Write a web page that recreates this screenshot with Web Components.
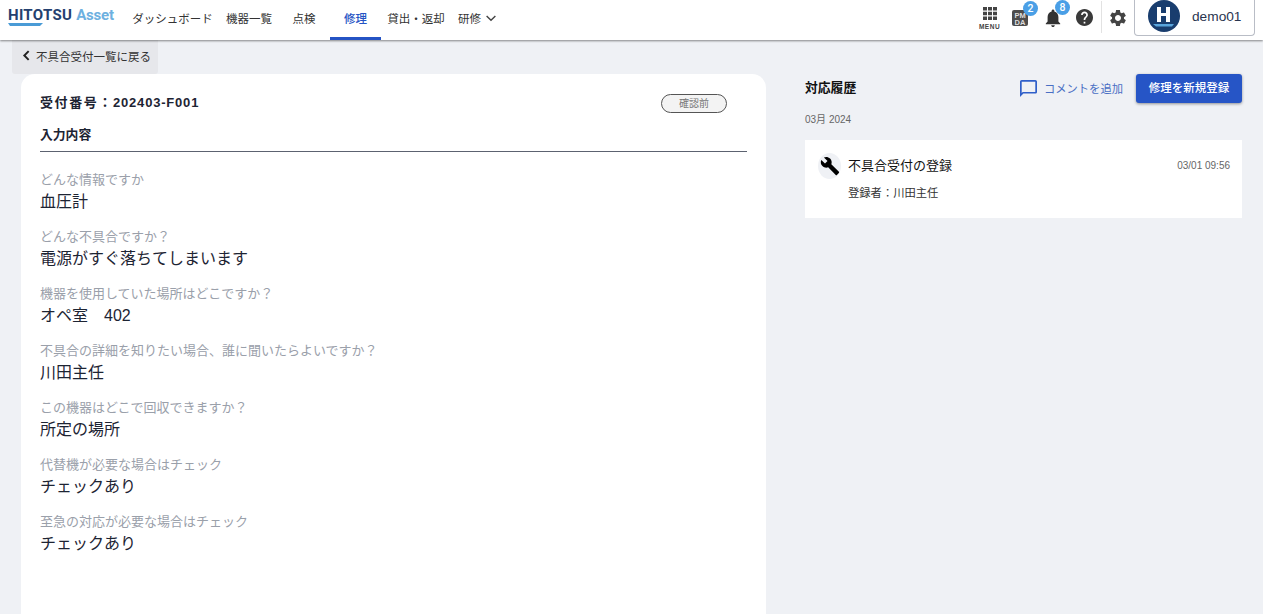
<!DOCTYPE html>
<html lang="ja">
<head>
<meta charset="utf-8">
<title>修理</title>
<style>
html,body{margin:0;height:100%;overflow:hidden;}
body{background:#eff1f5;font-family:"Liberation Sans","Noto Sans CJK JP",sans-serif;color:#1d2433;}
</style>
</head>
<body>
<app-header></app-header>
<back-link>不具合受付一覧に戻る</back-link>
<main-layout>
  <detail-card slot="left" prefix="受付番号：" number="202403-F001" status="確認前" section="入力内容">
    <qa-field label="どんな情報ですか">血圧計</qa-field>
    <qa-field label="どんな不具合ですか？">電源がすぐ落ちてしまいます</qa-field>
    <qa-field label="機器を使用していた場所はどこですか？">オペ室　402</qa-field>
    <qa-field label="不具合の詳細を知りたい場合、誰に聞いたらよいですか？">川田主任</qa-field>
    <qa-field label="この機器はどこで回収できますか？">所定の場所</qa-field>
    <qa-field label="代替機が必要な場合はチェック">チェックあり</qa-field>
    <qa-field label="至急の対応が必要な場合はチェック">チェックあり</qa-field>
  </detail-card>
  <history-panel slot="right"></history-panel>
</main-layout>
<script>
class AppHeader extends HTMLElement{
  constructor(){
    super();
    this.attachShadow({mode:'open'});
    this.shadowRoot.innerHTML = `
    <style>
    :host{display:flex;align-items:stretch;height:40px;background:#fff;box-shadow:0 1px 2px rgba(0,0,0,.45);position:relative;}
    .logo{width:125px;padding:8px 0 0 8px;box-sizing:border-box;flex:none;}
    .logo b{display:block;font:700 15px/14px Roboto,sans-serif;letter-spacing:.3px;color:#24406f;white-space:nowrap;}
    .logo b span{color:#6db0e0;letter-spacing:-.2px;}
    .logo svg{display:block;margin-top:1px;}
    nav{display:flex;font-size:11.5px;color:#333;}
    nav a{display:flex;align-items:center;justify-content:center;box-sizing:border-box;white-space:nowrap;border-bottom:3px solid transparent;padding-bottom:2px;}
    nav a.on{color:#2453c4;border-bottom-color:#2453c4;font-weight:500;}
    nav a.more{justify-content:flex-start;padding-left:7px;}
    nav svg{margin-left:3px;}
    .tools{margin-left:auto;display:flex;align-items:center;height:36px;padding-right:8px;}
    .tool{position:relative;display:flex;align-items:center;justify-content:center;flex:none;}
    .badge{position:absolute;top:-9px;width:15px;height:15px;border-radius:50%;background:#4a9fe6;color:#fff;font:500 10.5px/15px Roboto,sans-serif;text-align:center;}
    .menu{flex-direction:column;width:21px;}
    .menu small{font:700 6.5px/7px "Liberation Sans",sans-serif;letter-spacing:.5px;color:#444;margin-top:3px;}
    .pm{width:16px;height:16px;margin-left:12px;}
    .bell{width:18px;height:18px;margin-left:16px;}
    .help{width:17px;height:17px;margin-left:14px;margin-bottom:1px;}
    .sep{width:1px;height:32px;background:#e2e2e2;margin:-2px 0 0 8px;}
    .gear{width:20px;height:20px;margin-left:6px;}
    .user{display:flex;align-items:center;box-sizing:border-box;width:121px;height:37px;margin:-1px 0 0 6px;border:1px solid #b9bdc6;border-top:0;border-radius:0 0 4px 4px;padding:0 0 2px 13px;}
    .user b{font:400 13.7px "Liberation Sans",sans-serif;color:#2a3550;margin-left:12px;}
    </style>
    <div class="logo"><b>HITOTSU <span>Asset</span></b><svg width="35" height="3" viewBox="0 0 35 3"><path d="M0 0h35l-3 3H2z" fill="#4a9bd6"/></svg></div>
    <nav>
      <a style="width:95px">ダッシュボード</a>
      <a style="width:58px">機器一覧</a>
      <a style="width:52px">点検</a>
      <a class="on" style="width:51px">修理</a>
      <a style="width:70px">貸出・返却</a>
      <a class="more">研修<svg width="14" height="14" viewBox="0 0 24 24"><path d="M4.500 8.500l7.500 7.500 7.500-7.500" fill="none" stroke="#444" stroke-width="2.400"/></svg></a>
    </nav>
    <div class="tools">
      <div class="tool menu">
        <svg width="14" height="13" viewBox="0 0 14 13" fill="#444"><path d="M0 0h4v3.600H0zM5 0h4v3.600H5zM10 0h4v3.600h-4zM0 4.700h4v3.600H0zM5 4.700h4v3.600H5zM10 4.700h4v3.600h-4zM0 9.400h4V13H0zM5 9.400h4V13H5zM10 9.400h4V13h-4z"/></svg>
        <small>MENU</small>
      </div>
      <div class="tool pm">
        <svg width="16" height="16" viewBox="0 0 16 16"><rect width="16" height="16" rx="2" fill="#4d4d4d"/><text x="8" y="7.500" text-anchor="middle" font-family="Liberation Sans" font-weight="700" font-size="7.500" fill="#ddd">PM</text><text x="8" y="14.500" text-anchor="middle" font-family="Liberation Sans" font-weight="700" font-size="7.500" fill="#ddd">DA</text></svg>
        <span class="badge" style="right:-10px">2</span>
      </div>
      <div class="tool bell">
        <svg width="18" height="18" viewBox="2 2 20 20" fill="#333"><path d="M12 22c1.100 0 2-.9 2-2h-4c0 1.100.9 2 2 2zm6-6v-5c0-3.070-1.630-5.640-4.500-6.320V4c0-.83-.67-1.500-1.500-1.500s-1.500.67-1.500 1.500v.68C7.640 5.360 6 7.920 6 11v5l-2 2v1h16v-1l-2-2z"/></svg>
        <span class="badge" style="right:-8px">8</span>
      </div>
      <div class="tool help">
        <svg width="17" height="17" viewBox="2 2 20 20" fill="#3a3a3a"><path d="M12 2C6.480 2 2 6.480 2 12s4.480 10 10 10 10-4.480 10-10S17.520 2 12 2zm1 17h-2v-2h2v2zm2.070-7.750l-.9.92C13.450 12.900 13 13.500 13 15h-2v-.5c0-1.100.45-2.100 1.170-2.830l1.240-1.260c.37-.36.59-.86.59-1.410 0-1.100-.9-2-2-2s-2 .9-2 2H8c0-2.210 1.790-4 4-4s4 1.790 4 4c0 .88-.36 1.680-.93 2.250z"/></svg>
      </div>
      <div class="sep"></div>
      <div class="tool gear">
        <svg width="20" height="20" viewBox="0 0 24 24" fill="#444"><path d="M19.140 12.940c.04-.3.06-.61.06-.94 0-.32-.02-.64-.07-.94l2.030-1.580c.18-.14.23-.41.12-.61l-1.920-3.320c-.12-.22-.37-.29-.59-.22l-2.390.96c-.5-.38-1.030-.7-1.620-.94l-.36-2.540c-.04-.24-.24-.41-.48-.41h-3.840c-.24 0-.43.17-.47.41l-.36 2.540c-.59.24-1.130.57-1.620.94l-2.390-.96c-.22-.08-.47 0-.59.22L2.740 8.870c-.12.21-.08.47.12.61l2.030 1.580c-.05.3-.09.63-.09.94s.02.64.07.94l-2.030 1.580c-.18.14-.23.41-.12.61l1.920 3.320c.12.22.37.29.59.22l2.390-.96c.5.38 1.030.7 1.620.94l.36 2.540c.05.24.24.41.48.41h3.840c.24 0 .44-.17.47-.41l.36-2.540c.59-.24 1.130-.56 1.620-.94l2.390.96c.22.08.47 0 .59-.22l1.920-3.320c.12-.22.07-.47-.12-.61l-2.010-1.580zM12 15.600c-1.980 0-3.600-1.620-3.600-3.600s1.620-3.600 3.600-3.600 3.600 1.620 3.600 3.600-1.620 3.600-3.600 3.600z"/></svg>
      </div>
      <div class="user">
        <svg width="32" height="32" viewBox="0 0 32 32"><circle cx="16" cy="16" r="16" fill="#193d6e"/><path d="M9 7h4v6h5V7h4v15h-4v-6h-5v6H9z" fill="#fff"/><path d="M5 24h21l-2 2.500H8z" fill="#5aa5dc"/></svg>
        <b>demo01</b>
      </div>
    </div>`;
  }
}

class BackLink extends HTMLElement{
  constructor(){
    super();
    this.attachShadow({mode:'open'});
    this.shadowRoot.innerHTML = `
    <style>
    :host{display:flex;align-items:center;width:146px;height:34px;box-sizing:border-box;margin-left:12px;padding:0 0 3px 8px;background:#e6e7eb;border-radius:0 0 3px 3px;font-size:11.5px;color:#333;white-space:nowrap;}
    svg{margin-right:3px;}
    </style>
    <svg width="13" height="13" viewBox="0 0 24 24"><path d="M16 4l-8 8 8 8" fill="none" stroke="#222" stroke-width="3.600"/></svg>
    <slot></slot>`;
  }
}

class MainLayout extends HTMLElement{
  constructor(){
    super();
    this.attachShadow({mode:'open'});
    this.shadowRoot.innerHTML = `
    <style>
    :host{display:grid;grid-template-columns:745px 437px;column-gap:39px;padding-left:21px;}
    </style>
    <slot name="left"></slot>
    <slot name="right"></slot>`;
  }
}

class DetailCard extends HTMLElement{
  constructor(){
    super();
    this.attachShadow({mode:'open'});
  }
  connectedCallback(){
    this.shadowRoot.innerHTML = `
    <style>
    :host{display:block;background:#fff;border-radius:14px 14px 0 0;padding:19px 19px 0;height:560px;box-sizing:border-box;}
    .top{display:flex;justify-content:space-between;align-items:center;height:20px;}
    h1{margin:0;font-size:13px;line-height:20px;font-weight:700;letter-spacing:1.6px;}
    h1 span{letter-spacing:.8px;}
    .status{width:66px;height:19px;box-sizing:border-box;margin-right:20px;border:1px solid #555;border-radius:10px;background:#f3f3f3;font-size:10px;line-height:17px;text-align:center;color:#777;}
    h2{margin:12px 0 0;padding-bottom:6px;border-bottom:1px solid #5c6270;font-size:12.8px;line-height:20px;font-weight:700;}
    .list{display:flex;flex-direction:column;gap:12px;margin-top:18px;}
    </style>
    <div class="top"><h1>${this.getAttribute('prefix')}<span>${this.getAttribute('number')}</span></h1><div class="status">${this.getAttribute('status')}</div></div>
    <h2>${this.getAttribute('section')}</h2>
    <div class="list"><slot></slot></div>`;
  }
}

class QaField extends HTMLElement{
  constructor(){
    super();
    this.attachShadow({mode:'open'});
  }
  connectedCallback(){
    this.shadowRoot.innerHTML = `
    <style>
    :host{display:block;}
    .l{font-size:13px;line-height:19px;color:#9aa0aa;}
    .v{font-size:16px;line-height:26px;color:#1d2433;}
    </style>
    <div class="l">${this.getAttribute('label')}</div>
    <div class="v"><slot></slot></div>`;
  }
}

class HistoryPanel extends HTMLElement{
  constructor(){
    super();
    this.attachShadow({mode:'open'});
    this.shadowRoot.innerHTML = `
    <style>
    :host{display:block;}
    .top{display:flex;align-items:center;height:29px;}
    h2{margin:0 0 2px;font-size:12.8px;line-height:20px;font-weight:700;color:#111;}
    .add{margin-left:auto;display:flex;align-items:center;font-size:11.3px;color:#4a6fc4;margin-right:13px;}
    .add svg{margin-right:7px;}
    .add span{margin-bottom:2px;}
    button{width:106px;height:29px;border:0;border-radius:3px;background:#2655c6;color:#fff;font-family:inherit;font-size:11.5px;font-weight:500;box-shadow:0 1px 3px rgba(0,0,0,.4);padding:0 0 3px;}
    .month{font-size:10px;line-height:14px;color:#666;margin:10px 0 13px;}
    .item{background:#fff;height:78px;box-sizing:border-box;padding:12px 12px 0 13px;}
    .row{display:flex;align-items:center;height:26px;}
    .ico{width:23px;height:26px;border-radius:50%;background:#eff1f5;display:flex;align-items:center;justify-content:center;margin:2px 7px 0 0;}
    .t{font-size:13px;color:#111;margin-bottom:2px;}
    .d{margin-left:auto;font-size:10px;color:#666;}
    .by{font-size:11.3px;line-height:16px;color:#333;margin:7px 0 0 30px;}
    </style>
    <div class="top">
      <h2>対応履歴</h2>
      <div class="add">
        <svg width="17" height="17" viewBox="2 2 20 20" fill="#2f5fc9"><path d="M20 2H4c-1.100 0-2 .9-2 2v18l4-4h14c1.100 0 2-.9 2-2V4c0-1.100-.9-2-2-2zm0 14H5.200L4 17.200V4h16v12z"/></svg>
        <span>コメントを追加</span>
      </div>
      <button>修理を新規登録</button>
    </div>
    <div class="month">03月 2024</div>
    <div class="item">
      <div class="row">
        <span class="ico"><svg width="20" height="20" viewBox="0 0 24 24" fill="#000"><path d="M22.700 19l-9.100-9.100c.9-2.300.4-5-1.500-6.900-2-2-5-2.400-7.400-1.300L9 6 6 9 1.600 4.700C.4 7.100.9 10.100 2.900 12.100c1.900 1.900 4.600 2.400 6.900 1.500l9.100 9.100c.4.400 1 .4 1.400 0l2.300-2.300c.5-.4.5-1.100.1-1.400z"/></svg></span>
        <span class="t">不具合受付の登録</span>
        <span class="d">03/01 09:56</span>
      </div>
      <div class="by">登録者：川田主任</div>
    </div>`;
  }
}

customElements.define('app-header', AppHeader);
customElements.define('back-link', BackLink);
customElements.define('main-layout', MainLayout);
customElements.define('detail-card', DetailCard);
customElements.define('qa-field', QaField);
customElements.define('history-panel', HistoryPanel);
</script>
</body>
</html>
